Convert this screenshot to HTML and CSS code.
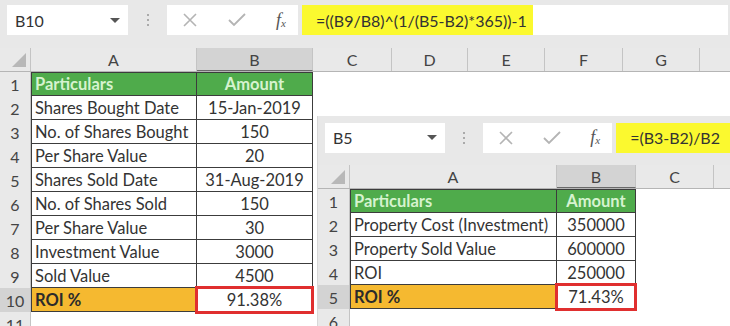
FILE: index.html
```html
<!DOCTYPE html>
<html>
<head>
  <title>ROI</title>
  <link rel="stylesheet" href="styles.css">
</head>
<body>
  <div class="screen">
    <div class="sheet sheet-main">
      <div class="toolbar">
        <div class="namebox"><span>B10</span><span class="caret"></span></div>
        <div class="dots"><i></i><i></i><i></i></div>
        <div class="fx-buttons">
          <svg width="14" height="14" viewBox="0 0 14 14"><path d="M1 1L13 13M13 1L1 13" stroke="#b4b4b4" stroke-width="1.6" fill="none"/></svg>
          <svg width="18" height="14" viewBox="0 0 18 14"><path d="M1 7L6 12L17 1" stroke="#b4b4b4" stroke-width="1.8" fill="none"/></svg>
          <span class="fx">f<sub>x</sub></span>
        </div>
        <div class="formula"><span class="hl">=((B9/B8)^(1/(B5-B2)*365))-1</span></div>
      </div>
      <div class="colheads">
        <div class="corner"><span class="tri"></span></div>
        <div class="ch">A</div>
        <div class="ch sel">B</div>
        <div class="ch">C</div>
        <div class="ch">D</div>
        <div class="ch">E</div>
        <div class="ch">F</div>
        <div class="ch">G</div>
        <div class="ch last"></div>
      </div>
      <div class="rows">
        <div class="row first"><div class="rn">1</div><div class="c a head">Particulars</div><div class="c b head">Amount</div><div></div></div>
        <div class="row"><div class="rn">2</div><div class="c a">Shares Bought Date</div><div class="c b">15-Jan-2019</div><div></div></div>
        <div class="row"><div class="rn">3</div><div class="c a">No. of Shares Bought</div><div class="c b">150</div><div></div></div>
        <div class="row"><div class="rn">4</div><div class="c a">Per Share Value</div><div class="c b">20</div><div></div></div>
        <div class="row"><div class="rn">5</div><div class="c a">Shares Sold Date</div><div class="c b">31-Aug-2019</div><div></div></div>
        <div class="row"><div class="rn">6</div><div class="c a">No. of Shares Sold</div><div class="c b">150</div><div></div></div>
        <div class="row"><div class="rn">7</div><div class="c a">Per Share Value</div><div class="c b">30</div><div></div></div>
        <div class="row"><div class="rn">8</div><div class="c a">Investment Value</div><div class="c b">3000</div><div></div></div>
        <div class="row"><div class="rn">9</div><div class="c a">Sold Value</div><div class="c b">4500</div><div></div></div>
        <div class="row"><div class="rn sel">10</div><div class="c a total">ROI %</div><div class="c b picked">91.38%</div><div></div></div>
        <div class="row"><div class="rn">11</div><div></div><div></div><div></div></div>
      </div>
    </div>

    <div class="sheet sheet-float">
      <div class="toolbar">
        <div class="namebox"><span>B5</span><span class="caret"></span></div>
        <div class="dots"><i></i><i></i><i></i></div>
        <div class="fx-buttons">
          <svg width="14" height="14" viewBox="0 0 14 14"><path d="M1 1L13 13M13 1L1 13" stroke="#b4b4b4" stroke-width="1.6" fill="none"/></svg>
          <svg width="18" height="14" viewBox="0 0 18 14"><path d="M1 7L6 12L17 1" stroke="#b4b4b4" stroke-width="1.8" fill="none"/></svg>
          <span class="fx">f<sub>x</sub></span>
        </div>
        <div class="formula"><span class="hl">=(B3-B2)/B2</span></div>
      </div>
      <div class="colheads">
        <div class="corner"><span class="tri"></span></div>
        <div class="ch">A</div>
        <div class="ch sel">B</div>
        <div class="ch">C</div>
        <div class="ch last"></div>
      </div>
      <div class="rows">
        <div class="row first"><div class="rn">1</div><div class="c a head">Particulars</div><div class="c b head">Amount</div><div></div></div>
        <div class="row"><div class="rn">2</div><div class="c a">Property Cost (Investment)</div><div class="c b">350000</div><div></div></div>
        <div class="row"><div class="rn">3</div><div class="c a">Property Sold Value</div><div class="c b">600000</div><div></div></div>
        <div class="row"><div class="rn">4</div><div class="c a">ROI</div><div class="c b">250000</div><div></div></div>
        <div class="row"><div class="rn sel">5</div><div class="c a total">ROI %</div><div class="c b picked">71.43%</div><div></div></div>
        <div class="row"><div class="rn">6</div><div></div><div></div><div></div></div>
      </div>
    </div>
  </div>
</body>
</html>
```

FILE: styles.css
```css
body {
  margin: 0;
  padding: 0;
  font-family: Lato, "Liberation Sans", sans-serif;
  color: #333;
  background-color: #fff;
}

.screen {
  position: relative;
  width: 730px;
  height: 326px;
  overflow: hidden;
}

.sheet {
  background-color: #fff;
}

/* formula bar */
.toolbar {
  display: flex;
  align-items: center;
  background-color: #e8e8e8;
  height: 48px;
  padding: 0 0 8px 7px;
  box-sizing: border-box;
}

.namebox {
  display: flex;
  align-items: center;
  justify-content: space-between;
  width: 121px;
  height: 30px;
  box-sizing: border-box;
  padding: 0 8px 0 8px;
  background-color: #fff;
  font-size: 16px;
}

.caret {
  width: 0;
  height: 0;
  border-left: 5px solid transparent;
  border-right: 5px solid transparent;
  border-top: 5px solid #555;
}

.dots {
  display: flex;
  flex-direction: column;
  gap: 3px;
  width: 39px;
  align-items: center;
}

.dots i {
  width: 2px;
  height: 2px;
  background-color: #aaa;
}

.fx-buttons {
  display: flex;
  align-items: center;
  justify-content: space-between;
  width: 131px;
  height: 30px;
  box-sizing: border-box;
  padding: 0 12px 0 16px;
  background-color: #fff;
}

.fx {
  font-family: "Liberation Serif", serif;
  font-style: italic;
  font-size: 18px;
  color: #555;
}

.fx sub {
  font-size: 11px;
  vertical-align: -1px;
}

.formula {
  flex: 1;
  display: flex;
  height: 30px;
  margin-left: 4px;
  margin-right: 2px;
  background-color: #fff;
}

.formula .hl {
  display: flex;
  align-items: center;
  background-color: #fbf92f;
  padding: 0 6px 0 14px;
  font-size: 16px;
  color: #333;
  white-space: nowrap;
}

/* column headers */
.colheads {
  display: grid;
  height: 24px;
  background-color: #e9e9e9;
  border-bottom: 1px solid #b5b5b5;
  box-sizing: border-box;
}

.sheet-main .colheads {
  grid-template-columns: 31px 166px 116px 79px 76px 77px 78px 77px 1fr;
}

.sheet-float .colheads {
  grid-template-columns: 32px 207px 79px 78px 1fr;
}

.corner {
  position: relative;
  border-right: 1px solid #c4c4c4;
}

.tri {
  position: absolute;
  right: 4px;
  bottom: 4px;
  width: 0;
  height: 0;
  border-left: 14px solid transparent;
  border-bottom: 14px solid #b8b8b8;
}

.ch {
  display: flex;
  align-items: center;
  justify-content: center;
  border-right: 1px solid #c4c4c4;
  font-size: 16px;
  color: #444;
}

.ch.sel {
  background-color: #d3d3d3;
  border-bottom: 1px solid #6a6a6a;
}

.ch.last {
  border-right: none;
}

/* rows */
.row {
  display: grid;
  height: 24px;
}

.sheet-main .row {
  grid-template-columns: 31px 166px 116px 1fr;
}

.sheet-float .row {
  grid-template-columns: 32px 207px 79px 1fr;
}

.rn {
  display: flex;
  align-items: center;
  justify-content: center;
  background-color: #e9e9e9;
  border-right: 1px solid #c4c4c4;
  font-size: 16px;
  color: #444;
}

.rn.sel {
  background-color: #d3d3d3;
}

.c {
  display: flex;
  align-items: center;
  box-sizing: border-box;
  border-right: 1px solid #3c3c3c;
  border-bottom: 1px solid #3c3c3c;
  font-size: 16.5px;
  white-space: nowrap;
}

.c.a {
  padding-left: 3px;
  border-left: 1px solid #3c3c3c;
}

.c.b {
  justify-content: center;
}

.row.first .c {
  border-top: 1px solid #3c3c3c;
}

.c.head {
  background-color: #4fab4b;
  color: #d6f3cf;
  font-weight: bold;
}

.c.total {
  background-color: #f5b930;
  font-weight: bold;
  color: #2b2b2b;
}

.c.picked {
  position: relative;
}

.c.picked::after {
  content: "";
  position: absolute;
  left: -2px;
  top: -2px;
  right: -2px;
  bottom: -3px;
  border: 3px solid #e02f2f;
}

/* second screenshot laid over the first */
.sheet-float {
  position: absolute;
  left: 318px;
  top: 116px;
  width: 412px;
  height: 210px;
  box-shadow: -1px 0 0 #d8d8d8;
}

.sheet-float .toolbar {
  height: 49px;
  padding-bottom: 6px;
}

.sheet-float .namebox {
  width: 123px;
}

.sheet-float .fx-buttons {
  width: 132px;
}

.sheet-float .formula {
  margin-right: 0;
}

.sheet-float .formula .hl {
  padding-right: 10px;
}
```
